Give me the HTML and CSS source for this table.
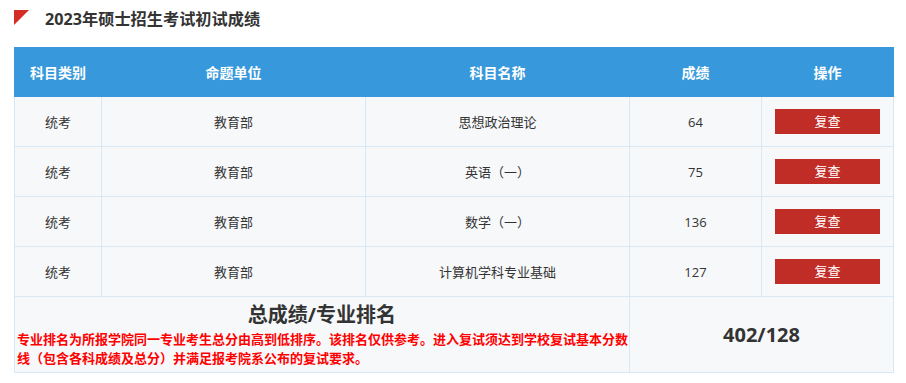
FILE: index.html
```html
<!DOCTYPE html>
<html lang="zh">
<head>
<meta charset="utf-8">
<link rel="stylesheet" href="styles.css">
</head>
<body>
<div class="page">
  <h2 class="title"><span class="flag"></span>2023年硕士招生考试初试成绩</h2>
  <table class="score">
    <colgroup>
      <col class="c1"><col class="c2"><col class="c3"><col class="c4"><col class="c5">
    </colgroup>
    <thead>
      <tr><th>科目类别</th><th>命题单位</th><th>科目名称</th><th>成绩</th><th>操作</th></tr>
    </thead>
    <tbody>
      <tr><td>统考</td><td>教育部</td><td>思想政治理论</td><td>64</td><td><span class="btn">复查</span></td></tr>
      <tr><td>统考</td><td>教育部</td><td>英语（一）</td><td>75</td><td><span class="btn">复查</span></td></tr>
      <tr><td>统考</td><td>教育部</td><td>数学（一）</td><td>136</td><td><span class="btn">复查</span></td></tr>
      <tr><td>统考</td><td>教育部</td><td>计算机学科专业基础</td><td>127</td><td><span class="btn">复查</span></td></tr>
      <tr class="sum">
        <td colspan="3" class="sum-left">
          <div class="sum-title">总成绩/专业排名</div>
          <div class="note"><span class="line">专业排名为所报学院同一专业考生总分由高到低排序。该排名仅供参考。进入复试须达到学校复试基本分数</span><span class="line">线（包含各科成绩及总分）并满足报考院系公布的复试要求。</span></div>
        </td>
        <td colspan="2" class="sum-right">402/128</td>
      </tr>
    </tbody>
  </table>
</div>
</body>
</html>
```
FILE: styles.css
```css
html, body {
  margin: 0;
  padding: 0;
  background: #ffffff;
}
body {
  font-family: "Open Sans", "Noto Sans CJK SC", sans-serif;
  color: #333333;
}
.page {
  padding: 6px 13px 0 14px;
}
.title {
  margin: 0;
  display: flex;
  align-items: center;
  gap: 16px;
  font-size: 16.2px;
  font-weight: bold;
  color: #333333;
  height: 26px;
  line-height: 26px;
}
.flag {
  width: 0;
  height: 0;
  border-top: 15px solid #d42d26;
  border-right: 15px solid transparent;
  margin-top: -4px;
}
.score {
  margin-top: 15px;
  width: 879px;
  border-collapse: collapse;
  table-layout: fixed;
  font-size: 13px;
}
.c1 { width: 87px; }
.c2 { width: 264px; }
.c3 { width: 264px; }
.c4 { width: 132px; }
.c5 { width: 132px; }
.score th {
  background: #3799db;
  color: #ffffff;
  font-size: 14px;
  font-weight: bold;
  height: 48px;
  padding: 0;
  border: 1px solid #3799db;
}
.score td {
  background: #f7f8fa;
  border: 1px solid #d8e8f4;
  text-align: center;
  height: 49px;
  padding: 0;
  color: #333333;
}
.btn {
  display: inline-block;
  width: 105px;
  height: 25px;
  line-height: 25px;
  background: #c02d27;
  color: #ffffff;
  font-size: 13px;
  vertical-align: middle;
}
.sum td {
  height: 73px;
}
.sum-left {
  padding: 0 2px 2px !important;
}
.sum-title {
  font-size: 20px;
  font-weight: bold;
  line-height: 30px;
  color: #333333;
}
.note {
  text-align: left;
  color: #ff0000;
  font-weight: bold;
  font-size: 13px;
  line-height: 19px;
}
.line {
  display: block;
  white-space: nowrap;
}
.sum-right {
  font-size: 20px;
  font-weight: bold;
  color: #333333;
}
```
